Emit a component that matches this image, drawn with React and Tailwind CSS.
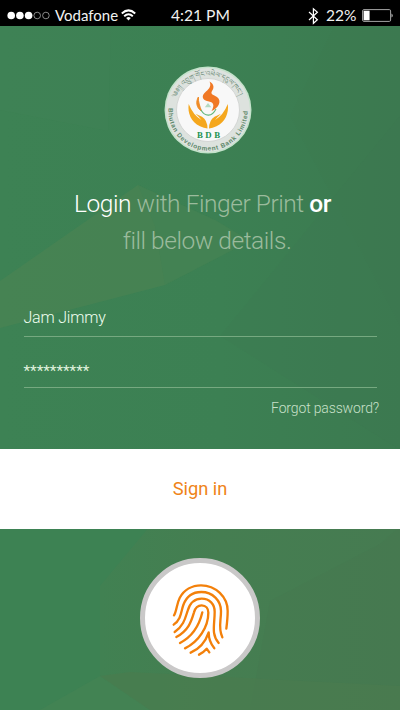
function Backdrop() {
  return (
    <svg className="absolute inset-0 h-full w-full" viewBox="0 0 400 684" preserveAspectRatio="none" aria-hidden="true">
      <defs>
        <linearGradient id="base" x1="0" x2="1" y1="0" y2="0">
          <stop offset="0" stopColor="#3d8254" />
          <stop offset=".55" stopColor="#3c8053" />
          <stop offset="1" stopColor="#3c7a50" />
        </linearGradient>
        <linearGradient id="low" x1="0" x2="1" y1="0" y2="0">
          <stop offset="0" stopColor="#418152" />
          <stop offset=".4" stopColor="#457e51" />
          <stop offset="1" stopColor="#467b51" />
        </linearGradient>
      </defs>
      <rect width="400" height="684" fill="url(#base)" />
      <path d="M0 0H111L108 105L0 84Z" fill="#438356" opacity=".25" />
      <path d="M334 0H400V300L290 90Z" fill="#3a764e" opacity=".15" />
      <path d="M400 90L220 310L400 424Z" fill="#3e7550" opacity=".12" />
      <path d="M138 159L0 255V302L165 259L250 215L215 194Z" fill="#4a8352" opacity=".7" />
      <path d="M138 159L155 200L165 259L250 215L215 194Z" fill="#408153" opacity=".5" />
      <path d="M0 500H150L100 560V684H0Z" fill="#3d8253" />
      <path d="M150 500H400V684H100V560Z" fill="url(#low)" />
      <path d="M270 575L380 518L400 500V684H250Z" fill="#457850" opacity=".4" />
      <path d="M100 650L150 684H40Z" fill="#458354" opacity=".7" />
      <path d="M100 650L130 646L400 660V684H150Z" fill="#4b7c4e" opacity=".6" />
    </svg>
  );
}

function StatusBar() {
  return (
    <header className="flex h-[26px] items-center bg-black pt-[5px] pl-[7px] font-[Lato,sans-serif] text-[15px] leading-5 text-[#f1f1f1]">
      <svg className="h-[9px] w-[44px]" viewBox="0 0 44 9">
        <g fill="#fff">
          <circle cx="4.2" cy="4.5" r="3.8" />
          <circle cx="12.9" cy="4.5" r="3.8" />
          <circle cx="21.6" cy="4.5" r="3.8" />
        </g>
        <g fill="none" stroke="#aaa" strokeWidth=".8">
          <circle cx="30.2" cy="4.5" r="3.3" />
          <circle cx="38.9" cy="4.5" r="3.3" />
        </g>
      </svg>
      <span className="-mt-px ml-[4px] w-[66px] whitespace-nowrap">Vodafone</span>
      <svg className="-mt-px h-[12px] w-[15px]" viewBox="0 0 15 12" fill="none" stroke="#fff" strokeWidth="2">
        <path d="M.8 4.4Q7.5-1.6 14.2 4.4M3.2 7.2Q7.5 3.4 11.8 7.2" />
        <path d="M5.2 9L7.5 11.5L9.8 9Q7.5 7.2 5.2 9Z" fill="#fff" stroke="none" />
      </svg>
      <span className="-mt-px ml-[35px] w-[60px] whitespace-nowrap text-[15.6px]">4:21 PM</span>
      <svg className="ml-[77px] h-[18px] w-[11px]" viewBox="0 0 11 18" fill="none" stroke="#fff" strokeWidth="1.2">
        <path d="M1 5L9.4 12.7L5.4 16.3V1.7L9.4 5.2L1 13" />
      </svg>
      <span className="-mt-px ml-[7px] w-[35px] whitespace-nowrap text-[15.5px]">22%</span>
      <svg className="ml-px h-[13px] w-[32px]" viewBox="0 0 32 13">
        <rect x=".6" y=".6" width="28" height="11.8" rx="1.3" fill="none" stroke="#a5a5a5" strokeWidth="1" />
        <rect x="1.6" y="1.7" width="6" height="9.6" fill="#fff" />
        <path d="M29.5 4.4Q32 6.5 29.5 8.6Z" fill="#bbb" />
      </svg>
    </header>
  );
}

function BankLogo() {
  return (
    <svg className="h-[88px] w-[88px] overflow-visible" viewBox="0 0 88 88" role="img" aria-label="BDB">
      <defs>
        <path id="lowerArc" d="M4.6 41A39.6 39.6 0 1 0 83.4 41" />
        <path id="upperArc" d="M11.5 34A34 34 0 0 1 76.5 34" />
      </defs>
      <circle cx="44" cy="44" r="43.5" fill="#c4e2cb" />
      <circle cx="44" cy="44" r="42" fill="#dde2de" />
      <circle cx="44" cy="44" r="31.5" fill="#f8f8f8" stroke="#cfd1cf" strokeWidth=".8" />
      <text className="font-[Liberation_Sans,sans-serif] font-bold" fontSize="6.4" fill="#5c8769" textLength="127" lengthAdjust="spacing">
        <textPath href="#lowerArc" startOffset="1">Bhutan Development Bank Limited</textPath>
      </text>
      <text className="font-[Noto_Serif_Tibetan,Noto_Sans,serif]" fontSize="6.8" fill="#6d8c78">
        <textPath href="#upperArc" startOffset="2">༄༅།། འབྲུག་གོང་འཕེལ་དངུལ་ཁང་།</textPath>
      </text>
      <path d="M45.5 15.5C47.5 20 45.5 22.5 42 25.5C36.5 30 38.5 34.5 44 35.2C49.5 36 51 39 47.5 45C55 42 58 34.5 53 31C49.5 28.5 46 28.5 48 25C50.5 21.5 50 18 45.5 15.5Z" fill="#f07824" />
      <path d="M34.4 31C31.5 36 32.5 42 37.5 45C35.8 40 34 36 34.4 31Z" fill="#ef8b27" stroke="#ef8b27" strokeWidth="1" />
      <path d="M37 44C41 51 48 51 52 43" fill="none" stroke="#63b77c" strokeWidth="1.1" />
      <path d="M44 37L40.8 41.3H47.3Z" fill="#b4dac2" />
      <path d="M24.7 38C23.4 47 27 56 36 60.2Q40 62 43.5 62.5Q43.4 54 38 50.7L31.6 47.8Q35 51 37.5 54Q29 49 24.7 38Z" fill="#f5a71d" />
      <path d="M63.8 38C65 47 61.5 56 52.5 60.2Q48.5 62 45 62.5Q45.1 54 50.5 50.7L57 47.8Q53.5 51 51 54Q59.5 49 63.8 38Z" fill="#f5a71d" />
      <text x="44.5" y="71.6" textAnchor="middle" fontSize="8.8" textLength="23" className="font-[Liberation_Serif,serif] font-bold" fill="#219150">BDB</text>
    </svg>
  );
}

function FingerprintIcon() {
  return (
    <svg className="h-[90px] w-[70px] shrink-0" viewBox="0 0 210 270" fill="none" stroke="#f3800a" strokeWidth="7" strokeLinecap="round" strokeLinejoin="round">
      <path d="M27 121C35 109 35 86 44 69C57 44 82 31 108 31C152 31 188 66 188 108C188 128 186 145 184 161" />
      <path d="M26 149C49 133 48 109 55 90C64 65 84 51 109 51C143 51 168 77 168 108C168 140 159 160 172 187" />
      <path d="M29 171C57 152 61 128 68 107C75 84 88 71 110 71C134 71 149 88 149 110C149 150 138 178 161 204" />
      <path d="M34 186C72 165 79 138 87 112C91 97 98 91 110 91C123 91 130 101 130 113C130 156 101 200 60 220" />
      <path d="M112 112C104 146 88 182 45 204" />
      <path d="M77 233C107 220 122 199 131 172C131 190 137 207 148 220" />
      <path d="M102 239C112 234 119 228 125 221L133 232" />
    </svg>
  );
}

export default function App() {
  return (
    <div className="flex h-[710px] w-[400px] flex-col overflow-hidden font-[Roboto,sans-serif]">
      <StatusBar />
      <main className="relative flex-1">
        <Backdrop />
        <div className="relative flex h-full flex-col">
          <div className="ml-[164px] pt-[40px]">
            <BankLogo />
          </div>
          <h1 className="mt-[30.5px] pl-[5px] text-center text-[24.5px] leading-[37px] font-light tracking-[-0.45px] whitespace-nowrap text-[#9bbb9d]">
            <span className="block"><span className="text-white">Login</span> with Finger Print <span className="font-medium text-white">or</span></span>
            <span className="block pl-[9px]">fill below details.</span>
          </h1>
          <form className="mt-[40px] flex flex-col">
            <div className="ml-[23.5px] flex h-[38px] w-[353.5px] items-center border-b border-[#76a980] pt-[2px] text-[16px] font-light tracking-[-0.2px] text-[#f0fff0]">Jam Jimmy</div>
            <div className="ml-[23.5px] flex h-[51px] w-[353.5px] items-center border-b border-[#76a980] pt-[20px] text-[15.3px] text-[#e0f3df]">**********</div>
            <a className="mt-[10px] mr-[21px] self-end text-[14px] leading-5 font-light tracking-[-0.15px] text-[#c8e0c9]">Forgot password?</a>
          </form>
          <button type="button" className="mt-[31px] h-[80px] w-full bg-white text-[18.3px] text-[#ef8418]">Sign in</button>
          <button type="button" aria-label="Fingerprint" className="mt-[29px] ml-[140px] flex size-[120px] items-center justify-center rounded-full border-[5.5px] border-[#c9c8c8] bg-white pt-[4px]">
            <FingerprintIcon />
          </button>
        </div>
      </main>
    </div>
  );
}
